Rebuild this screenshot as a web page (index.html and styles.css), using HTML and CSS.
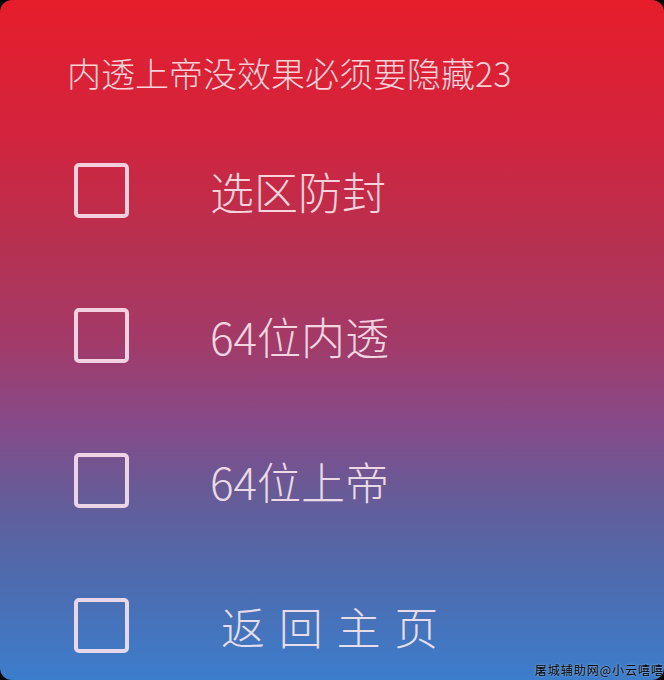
FILE: index.html
```html
<!DOCTYPE html>
<html lang="zh">
<head>
<meta charset="utf-8">
<link rel="stylesheet" href="styles.css">
</head>
<body>
<div class="panel">
  <div class="title">内透上帝没效果必须要隐藏23</div>
  <div class="row"><span class="box"></span><span class="label">选区防封</span></div>
  <div class="row"><span class="box"></span><span class="label">64位内透</span></div>
  <div class="row"><span class="box"></span><span class="label">64位上帝</span></div>
  <div class="row"><span class="box"></span><span class="label label-spaced">返 回 主 页</span></div>
  <div class="watermark">屠城辅助网@小云嘻嘻</div>
</div>
</body>
</html>
```
FILE: styles.css
```css
html, body {
  margin: 0;
  padding: 0;
  background: #000;
}
.panel {
  position: relative;
  width: 664px;
  height: 680px;
  border-radius: 12px;
  overflow: hidden;
  background: linear-gradient(to bottom,
    #e61d2a 0%,
    #d2243e 20%,
    #b8304f 35%,
    #a33a68 50%,
    #874a88 62%,
    #685a96 72%,
    #4f6aac 84%,
    #3c7dcc 100%);
  font-family: "Noto Sans CJK SC", "Noto Sans", sans-serif;
  color: rgba(255, 236, 242, 0.88);
  display: flex;
  flex-direction: column;
}
.title {
  flex: none;
  padding: 53px 0 25px 67px;
  font-size: 34px;
  line-height: 40px;
  font-weight: 300;
}
.row {
  flex: none;
  height: 145px;
  display: flex;
  align-items: center;
  padding-left: 74px;
}
.box {
  width: 55px;
  height: 55px;
  box-sizing: border-box;
  border: 4px solid rgba(250, 225, 238, 0.9);
  border-radius: 5px;
  flex: none;
}
.label {
  margin-left: 81px;
  font-size: 44px;
  line-height: 50px;
  font-weight: 300;
}
.label-spaced {
  margin-left: 92px;
  letter-spacing: 2px;
}
.watermark {
  position: absolute;
  right: 0;
  bottom: 3px;
  font-size: 12px;
  line-height: 14px;
  letter-spacing: 1px;
  color: #000;
  text-shadow: 0 0 2px rgba(255, 255, 255, 0.6);
}
```
